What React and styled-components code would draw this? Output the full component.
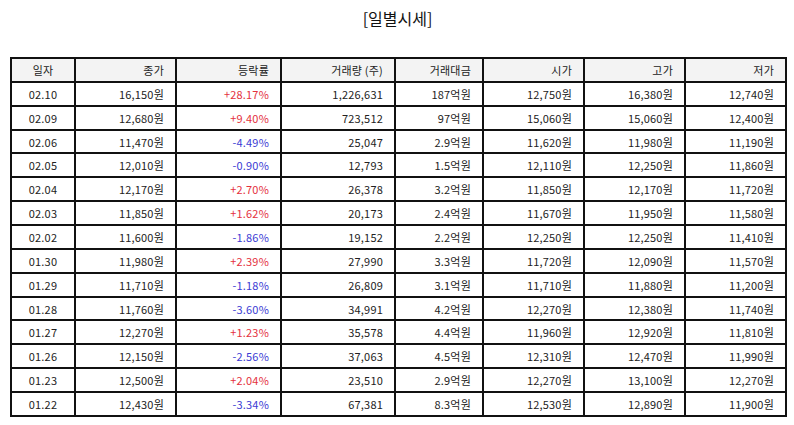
import styled, { createGlobalStyle } from 'styled-components'

const GlobalStyle = createGlobalStyle`
    body{
        margin:0;
        background:#fff;
        font-family: "Noto Sans CJK KR", "Noto Sans", sans-serif;
        color:#222;
    }
`

const columns = [
    { key: 'date', label: '일자', width: 64, align: 'center' },
    { key: 'close', label: '종가', width: 101 },
    { key: 'rate', label: '등락률', width: 105 },
    { key: 'volume', label: '거래량 (주)', width: 114 },
    { key: 'amount', label: '거래대금', width: 88 },
    { key: 'open', label: '시가', width: 101 },
    { key: 'high', label: '고가', width: 101 },
    { key: 'low', label: '저가', width: 101 },
]

const rows = [
    ['02.10', '16,150원', '+28.17%', '1,226,631', '187억원', '12,750원', '16,380원', '12,740원'],
    ['02.09', '12,680원', '+9.40%', '723,512', '97억원', '15,060원', '15,060원', '12,400원'],
    ['02.06', '11,470원', '-4.49%', '25,047', '2.9억원', '11,620원', '11,980원', '11,190원'],
    ['02.05', '12,010원', '-0.90%', '12,793', '1.5억원', '12,110원', '12,250원', '11,860원'],
    ['02.04', '12,170원', '+2.70%', '26,378', '3.2억원', '11,850원', '12,170원', '11,720원'],
    ['02.03', '11,850원', '+1.62%', '20,173', '2.4억원', '11,670원', '11,950원', '11,580원'],
    ['02.02', '11,600원', '-1.86%', '19,152', '2.2억원', '12,250원', '12,250원', '11,410원'],
    ['01.30', '11,980원', '+2.39%', '27,990', '3.3억원', '11,720원', '12,090원', '11,570원'],
    ['01.29', '11,710원', '-1.18%', '26,809', '3.1억원', '11,710원', '11,880원', '11,200원'],
    ['01.28', '11,760원', '-3.60%', '34,991', '4.2억원', '12,270원', '12,380원', '11,740원'],
    ['01.27', '12,270원', '+1.23%', '35,578', '4.4억원', '11,960원', '12,920원', '11,810원'],
    ['01.26', '12,150원', '-2.56%', '37,063', '4.5억원', '12,310원', '12,470원', '11,990원'],
    ['01.23', '12,500원', '+2.04%', '23,510', '2.9억원', '12,270원', '13,100원', '12,270원'],
    ['01.22', '12,430원', '-3.34%', '67,381', '8.3억원', '12,530원', '12,890원', '11,900원'],
]

const trendOf = value => (value.startsWith('+') ? 'up' : value.startsWith('-') ? 'down' : undefined)

export default function App() {
    return (
        <>
            <GlobalStyle />
            <Page>
                <Title>[일별시세]</Title>
                <PriceTable>
                    <colgroup>
                        {columns.map(col => <col key={col.key} style={{ width: col.width }} />)}
                    </colgroup>
                    <thead>
                        <tr>
                            {columns.map(col => (
                                <HeadCell key={col.key} $align={col.align}>{col.label}</HeadCell>
                            ))}
                        </tr>
                    </thead>
                    <tbody>
                        {rows.map(row => (
                            <tr key={row[0]}>
                                {row.map((value, i) => (
                                    <Cell
                                        key={columns[i].key}
                                        $align={columns[i].align}
                                        $trend={columns[i].key === 'rate' ? trendOf(value) : undefined}
                                    >
                                        {value}
                                    </Cell>
                                ))}
                            </tr>
                        ))}
                    </tbody>
                </PriceTable>
            </Page>
        </>
    )
}

const Page = styled.div`
    display:flex;
    flex-direction:column;
    align-items:flex-start;
    padding: 6px 9px 0 10px;
`
const Title = styled.h1`
    align-self:center;
    margin:0 0 27px;
    font-size:16px;
    font-weight:400;
    line-height:24px;
    color:#111;
`
const PriceTable = styled.table`
    width:775px;
    table-layout:fixed;
    border-collapse:collapse;
    border:2px solid #111;
    font-size:11px;
    letter-spacing:0.2px;
`
const cellBase = `
    height:21.87px;
    padding:0 11px 0 6px;
    border:2px solid #111;
    white-space:nowrap;
    line-height:16px;
`
const HeadCell = styled.th`
    ${cellBase}
    background:#f3f3f3;
    font-weight:400;
    color:#222;
    text-align:${p => p.$align || 'right'};
    ${p => p.$align === 'center' && 'padding:0;'}
`
const Cell = styled.td`
    ${cellBase}
    text-align:${p => p.$align || 'right'};
    ${p => p.$align === 'center' && 'padding:0;'}
    color:${p => (p.$trend === 'up' ? '#e4313d' : p.$trend === 'down' ? '#3b3bd4' : '#222')};
`
